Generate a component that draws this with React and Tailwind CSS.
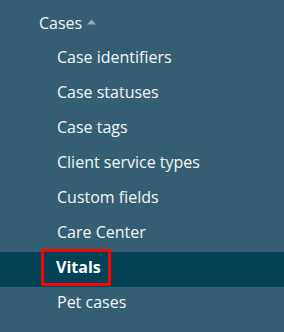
const ITEMS = [
  "Case identifiers",
  "Case statuses",
  "Case tags",
  "Client service types",
  "Custom fields",
  "Care Center",
];

export default function App() {
  return (
    <div className="w-[284px] h-[332px] overflow-hidden bg-[#345f72] text-[16px] text-[#f4f6f7] pt-[6px]" style={{ fontFamily: '"Open Sans", sans-serif' }}>
      {/* section header */}
      <div className="h-[33px] flex items-center pl-[39px] gap-[5px]">
        <span>Cases</span>
        <svg width="9" height="6" viewBox="0 0 9 6" className="mt-[-1px]">
          <path d="M0 5.5 L4.5 0.5 L9 5.5 Z" fill="#8eaab6" />
        </svg>
      </div>

      {ITEMS.map((label) => (
        <div key={label} className="h-[35px] flex items-center pl-[57px]">
          {label}
        </div>
      ))}

      {/* active item */}
      <div className="relative mt-[3px] h-[35px] flex items-center pb-[5px] pl-[56px] bg-[#034256] font-bold text-white">
        Vitals
        <span className="absolute left-[41px] top-[-3px] w-[70px] h-[37px] border-[3px] border-[#ff0000] rounded-[2px]" />
      </div>

      <div className="h-[30px] flex items-center pl-[57px]">Pet cases</div>
    </div>
  );
}
